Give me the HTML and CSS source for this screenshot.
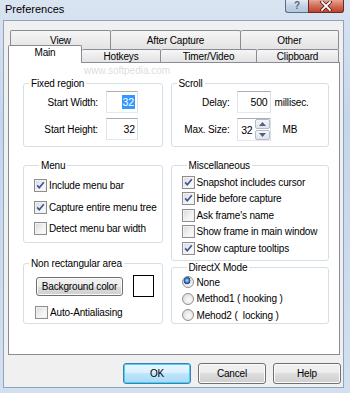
FILE: index.html
```html
<!DOCTYPE html>
<html lang="en">
<head>
    <meta charset="UTF-8" />
    <title>Preferences</title>
    <link rel="stylesheet" href="styles.css">
</head>
<body>
<div class="window">
    <div class="titlebar">
        <span class="title">Preferences</span>
        <div class="caption-btns">
            <span class="cap cap-help">?</span>
            <span class="cap cap-close">
                <svg width="14" height="10" viewBox="0 0 14 10">
                    <path d="M3 1 L11 9 M11 1 L3 9" stroke="#4a1a14" stroke-width="3.4" stroke-linecap="square"/>
                    <path d="M3 1 L11 9 M11 1 L3 9" stroke="#ffffff" stroke-width="1.8" stroke-linecap="square"/>
                </svg>
            </span>
        </div>
    </div>
    <div class="client">
        <div class="tabs">
            <div class="tab-row back">
                <div class="tab w-view">View</div>
                <div class="tab w-after">After Capture</div>
                <div class="tab w-other">Other</div>
            </div>
            <div class="tab-row front">
                <div class="tab active w-main">Main</div>
                <div class="tab w-hotkeys">Hotkeys</div>
                <div class="tab w-timer">Timer/Video</div>
                <div class="tab w-clip">Clipboard</div>
            </div>
            <div class="panel">
                <div class="col col-left">
                    <div class="group g-fixed">
                        <div class="group-title">Fixed region</div>
                        <div class="form-rows">
                            <div class="form-row">
                                <span class="lbl">Start Width:</span>
                                <div class="field"><span class="sel">32</span></div>
                            </div>
                            <div class="form-row">
                                <span class="lbl">Start Height:</span>
                                <div class="field">32</div>
                            </div>
                        </div>
                    </div>
                    <div class="group g-menu">
                        <div class="group-title">Menu</div>
                        <div class="check-list">
                            <label class="check-row"><span class="cb checked"></span>Include menu bar</label>
                            <label class="check-row"><span class="cb checked"></span>Capture entire menu tree</label>
                            <label class="check-row"><span class="cb"></span>Detect menu bar width</label>
                        </div>
                    </div>
                    <div class="group g-nonrect">
                        <div class="group-title">Non rectangular area</div>
                        <div class="color-row">
                            <div class="btn btn-bg">Background color</div>
                            <div class="swatch"></div>
                        </div>
                        <label class="check-row anti"><span class="cb"></span>Auto-Antialiasing</label>
                    </div>
                </div>
                <div class="col col-right">
                    <div class="group g-scroll">
                        <div class="group-title">Scroll</div>
                        <div class="form-rows">
                            <div class="form-row">
                                <span class="lbl">Delay:</span>
                                <div class="field wide">500</div>
                                <span class="unit">millisec.</span>
                            </div>
                            <div class="form-row tall">
                                <span class="lbl">Max. Size:</span>
                                <div class="field wide spin">
                                    <span class="spin-val">32</span>
                                    <span class="spin-btns">
                                        <span class="spin-btn"><svg width="7" height="4" viewBox="0 0 7 4"><path d="M0 4 L3.5 0 L7 4 Z" fill="#4d6185"/></svg></span>
                                        <span class="spin-btn"><svg width="7" height="4" viewBox="0 0 7 4"><path d="M0 0 L3.5 4 L7 0 Z" fill="#4d6185"/></svg></span>
                                    </span>
                                </div>
                                <span class="unit mb">MB</span>
                            </div>
                        </div>
                    </div>
                    <div class="group g-misc">
                        <div class="group-title">Miscellaneous</div>
                        <div class="check-list">
                            <label class="check-row"><span class="cb checked"></span>Snapshot includes cursor</label>
                            <label class="check-row"><span class="cb checked"></span>Hide before capture</label>
                            <label class="check-row"><span class="cb"></span>Ask frame's name</label>
                            <label class="check-row"><span class="cb"></span>Show frame in main window</label>
                            <label class="check-row"><span class="cb checked"></span>Show capture tooltips</label>
                        </div>
                    </div>
                    <div class="group g-directx">
                        <div class="group-title">DirectX Mode</div>
                        <div class="check-list">
                            <label class="check-row"><span class="radio on"></span>None</label>
                            <label class="check-row"><span class="radio"></span>Method1 ( hooking )</label>
                            <label class="check-row"><span class="radio"></span>Mehod2 (&nbsp; locking )</label>
                        </div>
                    </div>
                </div>
            </div>
            <span class="mark">www.softpedia.com</span>
        </div>
        <div class="dlg-buttons">
            <div class="btn default">OK</div>
            <div class="btn">Cancel</div>
            <div class="btn">Help</div>
        </div>
    </div>
</div>
</body>
</html>
```

FILE: styles.css
```css
* {
    box-sizing: border-box;
    margin: 0;
    padding: 0;
}
html, body {
    width: 350px;
    height: 393px;
    overflow: hidden;
}
body {
    font-family: "Liberation Sans", Arial, sans-serif;
    font-size: 10px;
    letter-spacing: -0.15px;
    color: #000;
    background: #cbd9eb;
}

/* window frame */
.window {
    height: 393px;
    padding: 0 6px 5px 3px;
    display: flex;
    flex-direction: column;
    background: linear-gradient(to bottom, #d9e4f1, #c6d6ea 30%, #cddbec 70%, #d3e0ef);
}
.titlebar {
    height: 20px;
    display: flex;
    justify-content: space-between;
    align-items: flex-start;
}
.title {
    font-size: 11px;
    letter-spacing: 0;
    line-height: 18px;
    padding-left: 2px;
}
.caption-btns {
    display: flex;
}
.cap {
    height: 13px;
    display: flex;
    align-items: center;
    justify-content: center;
    border: 1px solid #5d6e83;
    border-top: none;
}
.cap-help {
    width: 23px;
    border-right: none;
    border-radius: 0 0 0 3px;
    background: linear-gradient(#e3ebf5, #c2d2e5 50%, #b3c7df);
    color: #5a6a7c;
    font-size: 10px;
    font-weight: bold;
    line-height: 12px;
}
.cap-close {
    width: 36px;
    border-color: #6e2a20;
    border-radius: 0 0 3px 0;
    background: linear-gradient(#e6a596, #d26c58 50%, #c0412e);
}

.client {
    flex: 1;
    background: #f0f0f0;
    border: 1px solid #8fa4bb;
    padding: 9px 0 0 4px;
}

/* tabs */
.tabs {
    width: 332px;
    position: relative;
}
.tab-row {
    display: flex;
}
.tab-row.back {
    height: 19px;
    padding-left: 2px;
}
.tab-row.front {
    height: 13px;
    position: relative;
    z-index: 1;
}
.tab {
    height: 100%;
    display: flex;
    align-items: center;
    justify-content: center;
    border: 1px solid #898c95;
    border-bottom: none;
    border-radius: 2px 2px 0 0;
    background: linear-gradient(#f6f6f6, #ececec 50%, #e3e3e3);
}
.tab + .tab {
    border-left: none;
}
.tab.active {
    height: 18px;
    margin-top: -4px;
    background: #fff;
    align-items: flex-start;
    padding-top: 1px;
}
.w-view { width: 101px; }
.w-after { width: 130px; }
.w-other { width: 98px; }
.w-main { width: 74px; }
.w-hotkeys { width: 79px; }
.w-timer { width: 96px; }
.w-clip { width: 82px; }

/* faint watermark on the page */
.mark {
    position: absolute;
    z-index: 2;
    left: 76px;
    top: 35px;
    font-size: 10px;
    letter-spacing: 0;
    white-space: nowrap;
    pointer-events: none;
    color: rgba(150, 150, 150, 0.35);
}

.panel {
    height: 293px;
    border: 1px solid #898c95;
    background: #fff;
    display: flex;
    gap: 8px;
    padding: 20px 10px 0 14px;
}
.col {
    display: flex;
    flex-direction: column;
}
.col-left {
    width: 140px;
}
.col-right {
    width: 159px;
}

/* group boxes */
.group {
    border: 1px solid #d5dfe5;
    border-radius: 3px;
}
.group-title {
    width: fit-content;
    margin: -7px 0 0 5px;
    padding: 0 2px;
    background: #fff;
    line-height: 13px;
}
.g-fixed, .g-scroll {
    height: 64px;
}
.g-menu {
    height: 78px;
    margin-top: 18px;
    padding-left: 10px;
}
.g-nonrect {
    height: 61px;
    margin-top: 20px;
}
.g-misc {
    height: 96px;
    margin-top: 18px;
    padding-left: 10px;
}
.g-directx {
    height: 57px;
    margin-top: 6px;
    padding-left: 10px;
}

/* label + field rows */
.form-rows {
    display: flex;
    flex-direction: column;
    gap: 5px;
    padding-top: 1px;
}
.form-row {
    display: flex;
    align-items: center;
    height: 22px;
}
.form-row.tall {
    height: 23px;
}
.lbl {
    text-align: right;
}
.g-fixed .lbl {
    width: 74px;
    margin-right: 8px;
}
.g-scroll .lbl {
    width: 58px;
    margin-right: 7px;
}
.field {
    width: 32px;
    height: 100%;
    display: flex;
    align-items: center;
    justify-content: flex-end;
    padding-right: 2px;
    background: #fff;
    border: 1px solid;
    border-color: #abadb3 #dbdfe6 #e3e9ef #e2e3ea;
    font-size: 10.5px;
}
.field.wide {
    width: 34px;
}
.sel {
    background: #3399ff;
    color: #fff;
    line-height: 14px;
    padding: 0 1px;
}
.unit {
    margin-left: 4px;
}
.unit.mb {
    margin-left: 12px;
}
.field.spin {
    padding-right: 0;
}
.spin-val {
    margin-right: 2px;
}
.spin-btns {
    width: 15px;
    height: 100%;
    display: flex;
    flex-direction: column;
    gap: 1px;
}
.spin-btn {
    flex: 1;
    display: flex;
    align-items: center;
    justify-content: center;
    border: 1px solid #b5bcc7;
    border-radius: 2px;
    background: linear-gradient(#f4f6f9, #dfe4ea);
}

/* checkboxes and radios */
.check-list {
    display: flex;
    flex-direction: column;
    padding-top: 2px;
}
.check-row {
    display: flex;
    align-items: center;
    gap: 2px;
    height: 16.5px;
}
.g-menu .check-list {
    padding-top: 3px;
}
.g-menu .check-row {
    height: 21.5px;
}
.g-directx .check-list {
    padding-top: 0;
}
.cb {
    width: 13px;
    height: 13px;
    flex: none;
    border: 1px solid #8e8f8f;
    background: linear-gradient(135deg, #d8d8d8, #f4f4f4 60%, #fdfdfd);
    box-shadow: inset 0 0 0 1px #f1f1f1;
}
.cb.checked {
    background-image: url("data:image/svg+xml;utf8,<svg xmlns='http://www.w3.org/2000/svg' width='11' height='11' viewBox='0 0 11 11'><path d='M2.2 5.4 L4.3 7.8 L8.8 2.3' fill='none' stroke='%233a5598' stroke-width='1.7'/></svg>"), linear-gradient(135deg, #d8d8d8, #f4f4f4 60%, #fdfdfd);
    background-repeat: no-repeat;
}
.radio {
    width: 12px;
    height: 12px;
    flex: none;
    margin-right: 1px;
    border: 1px solid #8e8f8f;
    border-radius: 50%;
    background: radial-gradient(circle at 60% 60%, #fcfcfc, #d6d6d6);
}
.radio.on {
    background: radial-gradient(circle at 40% 35%, #bfe1fb 0, #3d86d2 2px, #103e7d 3.3px, #d9dde2 3.6px, #f5f5f5 6px);
}

/* non rectangular area */
.color-row {
    display: flex;
    align-items: center;
    gap: 10px;
    margin-top: 5px;
    padding-left: 12px;
    height: 22px;
}
.swatch {
    width: 21px;
    height: 22px;
    border: 1px solid #000;
    background: #fff;
}
.check-row.anti {
    margin-top: 7px;
    padding-left: 11px;
    height: 16px;
}

/* buttons */
.btn {
    height: 21px;
    display: flex;
    align-items: center;
    justify-content: center;
    border: 1px solid #707070;
    border-radius: 3px;
    background: linear-gradient(#f2f2f2, #ebebeb 50%, #dddddd 50%, #cfcfcf);
    box-shadow: inset 0 0 0 1px #fbfbfb;
}
.btn-bg {
    width: 87px;
    height: 19px;
}
.btn.default {
    border-color: #3c7fb1;
    box-shadow: inset 0 0 0 1px #48d0f8;
    background: linear-gradient(#eaf6fd, #d9f0fc 50%, #bee6fd 50%, #a7d9f5);
}
.dlg-buttons {
    width: 333px;
    display: flex;
    justify-content: flex-end;
    gap: 7px;
    margin-top: 8px;
}
.dlg-buttons .btn {
    width: 68px;
}
```
